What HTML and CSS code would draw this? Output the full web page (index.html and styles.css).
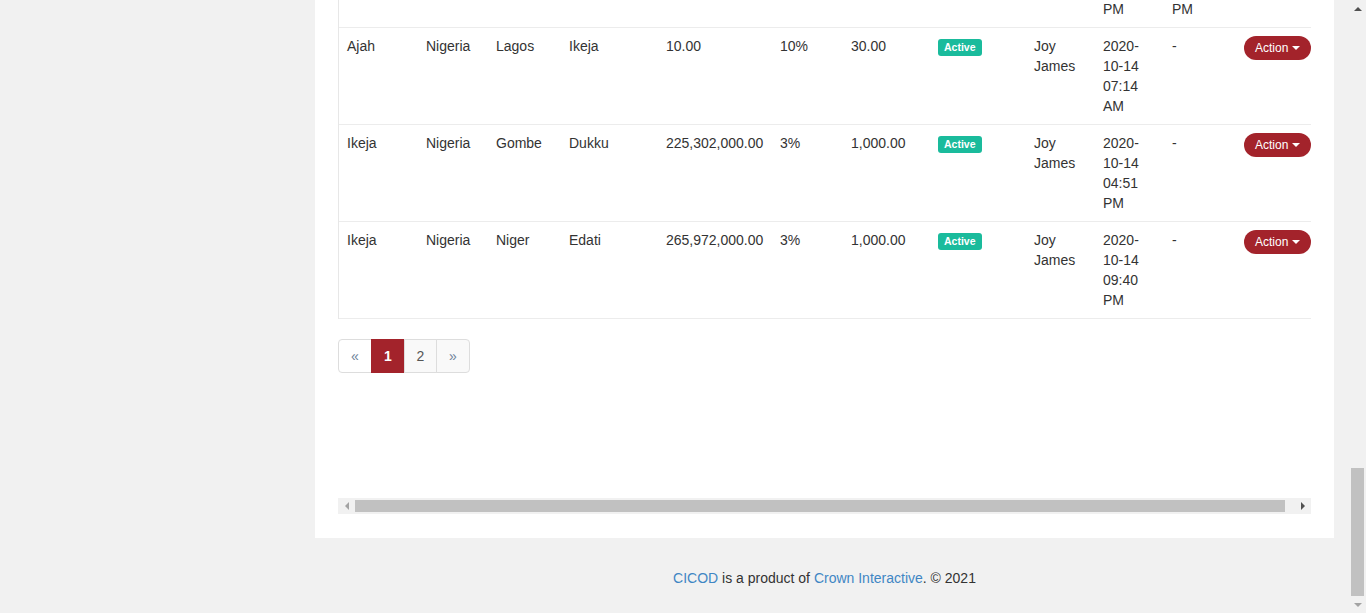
FILE: index.html
```html
<!DOCTYPE html>
<html lang="en">
<head>
<meta charset="utf-8">
<title>CICOD</title>
<link rel="stylesheet" href="styles.css">
</head>
<body>
<div class="app">
  <aside class="sidebar"></aside>
  <main class="main">
    <section class="panel">
      <div class="table-wrap">
        <table class="data">
          <colgroup>
            <col class="c1"><col class="c2"><col class="c3"><col class="c4"><col class="c5"><col class="c6"><col class="c7"><col class="c8"><col class="c9"><col class="c10"><col class="c11"><col class="c12">
          </colgroup>
          <tbody>
            <tr class="cut">
              <td></td><td></td><td></td><td></td><td></td><td></td><td></td><td></td><td></td><td>PM</td><td>PM</td><td></td>
            </tr>
            <tr>
              <td>Ajah</td><td>Nigeria</td><td>Lagos</td><td>Ikeja</td><td class="num">10.00</td><td>10%</td><td class="num">30.00</td>
              <td><span class="badge">Active</span></td><td>Joy James</td><td>2020-10-14 07:14 AM</td><td>-</td>
              <td><button class="action">Action <span class="caret"></span></button></td>
            </tr>
            <tr>
              <td>Ikeja</td><td>Nigeria</td><td>Gombe</td><td>Dukku</td><td class="num">225,302,000.00</td><td>3%</td><td class="num">1,000.00</td>
              <td><span class="badge">Active</span></td><td>Joy James</td><td>2020-10-14 04:51 PM</td><td>-</td>
              <td><button class="action">Action <span class="caret"></span></button></td>
            </tr>
            <tr>
              <td>Ikeja</td><td>Nigeria</td><td>Niger</td><td>Edati</td><td class="num">265,972,000.00</td><td>3%</td><td class="num">1,000.00</td>
              <td><span class="badge">Active</span></td><td>Joy James</td><td>2020-10-14 09:40 PM</td><td>-</td>
              <td><button class="action">Action <span class="caret"></span></button></td>
            </tr>
          </tbody>
        </table>
      </div>
      <nav class="pager">
        <span class="pg pg-first pg-muted">&laquo;</span>
        <span class="pg pg-active">1</span>
        <span class="pg pg-alt">2</span>
        <span class="pg pg-last pg-alt pg-muted">&raquo;</span>
      </nav>
      <div class="hscroll">
        <span class="hs-btn"><span class="tri-left"></span></span>
        <span class="hs-thumb"></span>
        <span class="hs-btn hs-end"><span class="tri-right"></span></span>
      </div>
    </section>
    <footer class="footer">
      <a href="#" class="link">CICOD</a> is a product of <a href="#" class="link">Crown Interactive</a>. &copy; 2021
    </footer>
  </main>
  <div class="vscroll">
    <span class="vs-btn"><span class="tri-up"></span></span>
    <span class="vs-space"></span>
    <span class="vs-thumb"></span>
    <span class="vs-btn"><span class="tri-down"></span></span>
  </div>
</div>
</body>
</html>
```
FILE: styles.css
```css
* { box-sizing: border-box; }
html, body { margin: 0; padding: 0; }
body {
  background: #f1f1f1;
  font-family: "Liberation Sans", Arial, sans-serif;
  font-size: 14px;
  line-height: 20px;
  color: #333;
  overflow: hidden;
}
.app {
  display: flex;
  height: 613px;
}
.sidebar { width: 315px; flex: none; }
.main {
  width: 1019px;
  flex: none;
  display: flex;
  flex-direction: column;
  margin-right: 15px;
}
.panel {
  background: #fff;
  height: 538px;
  padding: 0 23px;
  display: flex;
  flex-direction: column;
}
.table-wrap {
  width: 973px;
  overflow: hidden;
}
.data {
  border-collapse: separate;
  border-spacing: 0;
  table-layout: fixed;
  width: 982px;
  border-left: 1px solid #e7e7e7;
}
.c1 { width: 79px; } .c2 { width: 70px; } .c3 { width: 73px; } .c4 { width: 97px; }
.c5 { width: 114px; } .c6 { width: 71px; } .c7 { width: 87px; } .c8 { width: 96px; }
.c9 { width: 69px; } .c10 { width: 69px; } .c11 { width: 72px; } .c12 { width: 84px; }
.data td {
  padding: 8px 8px 7px;
  vertical-align: top;
  border-bottom: 1px solid #ececec;
  text-align: left;
}
.data tr:not(.cut) td { padding-bottom: 8px; height: 97px; }
.data .cut td {
  padding: 0 8px 9px;
  line-height: 18px;
  height: 28px;
}
.num { white-space: nowrap; }
.badge {
  display: inline-block;
  margin-top: 3px;
  height: 17px;
  line-height: 17px;
  padding: 0 6px;
  background: #1abb9c;
  color: #fff;
  font-size: 10.5px;
  font-weight: bold;
  border-radius: 3px;
  vertical-align: top;
}
.action {
  display: inline-flex;
  align-items: center;
  height: 24px;
  padding: 0 11px 0 11px;
  background: #a3232b;
  color: #fff;
  border: none;
  border-radius: 12px;
  font-family: "Liberation Sans", Arial, sans-serif;
  font-size: 12px;
  white-space: nowrap;
  margin-top: 0;
}
.caret {
  display: inline-block;
  width: 0;
  height: 0;
  margin-left: 4px;
  border-top: 4px solid #fff;
  border-left: 4px solid transparent;
  border-right: 4px solid transparent;
}
.pager {
  display: flex;
  margin-top: 20px;
}
.pg {
  display: block;
  height: 34px;
  padding: 6px 12px;
  border: 1px solid #ddd;
  margin-left: -1px;
  color: #555;
  background: #fff;
  line-height: 20px;
}
.pg-first { margin-left: 0; border-radius: 4px 0 0 4px; width: 34px; text-align: center; padding: 6px 0; }
.pg-last { border-radius: 0 4px 4px 0; width: 34px; text-align: center; padding: 6px 0; }
.pg-muted { color: #6e8299; }
.pg-alt { background: #f9f9f9; }
.pg-active {
  background: #a3232b;
  border-color: #a3232b;
  color: #fff;
  font-weight: bold;
  width: 34px;
  text-align: center;
  padding: 6px 0;
}
.pg-alt:not(.pg-last) { width: 33px; text-align: center; padding: 6px 0; }
.hscroll {
  margin-top: 125px;
  width: 973px;
  height: 16px;
  background: #f1f1f1;
  display: flex;
  align-items: center;
}
.hs-btn {
  width: 17px;
  height: 16px;
  display: flex;
  align-items: center;
  justify-content: center;
  flex: none;
}
.hs-end { width: 26px; padding-left: 9px; }
.hs-thumb {
  flex: 1;
  height: 12px;
  background: #c1c1c1;
}
.tri-left {
  width: 0; height: 0;
  border-right: 4px solid #a3a3a3;
  border-top: 4px solid transparent;
  border-bottom: 4px solid transparent;
}
.tri-right {
  width: 0; height: 0;
  border-left: 4px solid #505050;
  border-top: 4px solid transparent;
  border-bottom: 4px solid transparent;
}
.footer {
  margin-top: 30px;
  text-align: center;
}
.link { color: #3f86c4; text-decoration: none; }
.vscroll {
  width: 17px;
  flex: none;
  display: flex;
  flex-direction: column;
  align-items: center;
  background: #f1f1f1;
}
.vs-btn {
  height: 17px;
  width: 17px;
  display: flex;
  align-items: center;
  justify-content: center;
  flex: none;
}
.vs-space { flex: 1; }
.vs-thumb {
  width: 13px;
  height: 128px;
  background: #c1c1c1;
  flex: none;
}
.tri-up {
  width: 0; height: 0;
  border-bottom: 4px solid #505050;
  border-left: 4px solid transparent;
  border-right: 4px solid transparent;
}
.tri-down {
  width: 0; height: 0;
  border-top: 4px solid #a3a3a3;
  border-left: 4px solid transparent;
  border-right: 4px solid transparent;
}
```
